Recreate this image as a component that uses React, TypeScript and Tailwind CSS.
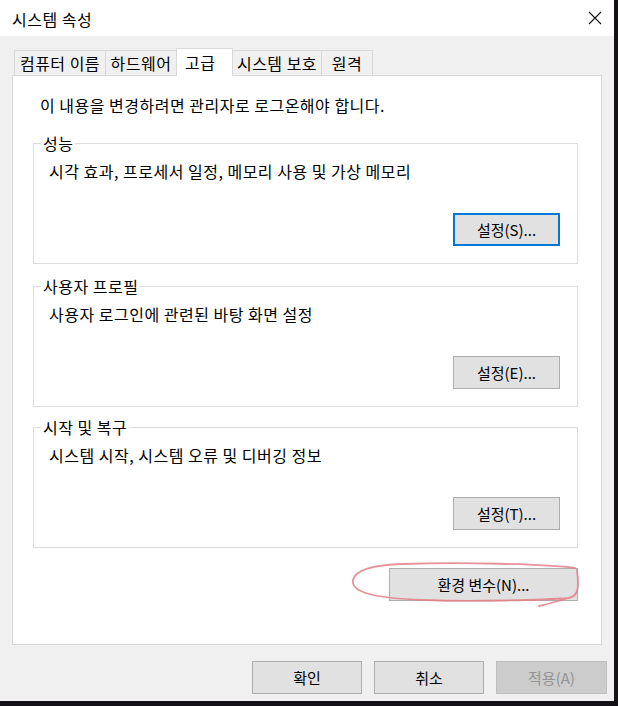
import React from "react";

const font = { fontFamily: '"Noto Sans CJK KR", "Noto Sans", sans-serif' };

function Btn({ label, focused = false, disabled = false, w = "w-[107px]" }: { label: string; focused?: boolean; disabled?: boolean; w?: string }) {
  const base = `${w} h-[33px] flex items-center justify-center text-[15px] leading-none`;
  if (disabled)
    return <div className={`${base} bg-[#cccccc] border border-[#bfbfbf] text-[#939393]`}>{label}</div>;
  if (focused)
    return <div className={`${base} bg-[#e1e1e1] border-2 border-[#0078d7] text-black`}>{label}</div>;
  return <div className={`${base} bg-[#e1e1e1] border border-[#adadad] text-black`}>{label}</div>;
}

function Group({ title, text, button, focused = false }: { title: string; text: string; button: string; focused?: boolean }) {
  return (
    <div className="relative w-[545px] h-[121px] border border-[#dcdcdc] flex flex-col">
      <span className="absolute -top-[11px] left-[7px] bg-white px-[2px] text-[16px] tracking-[0.5px] leading-[20px] text-black">{title}</span>
      <div className="pl-[15px] pt-[17px] text-[16px] tracking-[0.5px] leading-[20px] text-black">{text}</div>
      <div className="flex justify-end pr-[17px] mt-[32px]">
        <Btn label={button} focused={focused} />
      </div>
    </div>
  );
}

export default function App() {
  const tabs = [
    { l: "컴퓨터 이름", w: "w-[92px]" },
    { l: "하드웨어", w: "w-[72px]" },
    { l: "고급", w: "w-[57px]", sel: true },
    { l: "시스템 보호", w: "w-[90px]" },
    { l: "원격", w: "w-[52px]" },
  ];
  return (
    <div className="w-[618px] h-[706px] bg-[#141117] overflow-hidden" style={font}>
      <div className="relative w-[614px] h-[701px] bg-[#f0f0f0] flex flex-col">
        {/* title bar */}
        <div className="h-[36px] bg-white flex items-center justify-between pl-[12px] pr-[12px] shrink-0">
          <span className="text-[16px] tracking-[0.5px] leading-[20px] text-black mt-[1px]">시스템 속성</span>
          <svg width="14" height="14" viewBox="0 0 14 14">
            <path d="M1 1 L13 13 M13 1 L1 13" stroke="#111" strokeWidth="1.1" fill="none" />
          </svg>
        </div>
        {/* tabs */}
        <div className="flex items-end pl-[14px] pt-[12px] h-[39px] shrink-0">
          {tabs.map((t) =>
            t.sel ? (
              <div
                key={t.l}
                className={`${t.w} h-[28px] bg-white border border-b-0 border-[#d9d9d9] relative z-10 -mb-px -ml-px flex items-start pl-[8px] pt-[3px] text-[16px] tracking-[0.5px] leading-[20px] text-black`}
              >
                {t.l}
              </div>
            ) : (
              <div
                key={t.l}
                className={`${t.w} h-[25px] bg-[#f0f0f0] border border-b-0 border-[#d9d9d9] -ml-px first:ml-0 flex items-center justify-center text-[16px] tracking-[0.5px] leading-[20px] text-black`}
              >
                {t.l}
              </div>
            )
          )}
        </div>
        {/* panel */}
        <div className="mx-[12px] w-[590px] h-[570px] bg-white border border-[#d9d9d9] flex flex-col pl-[20px] shrink-0 relative">
          <div className="pl-[7px] pt-[19px] text-[16px] tracking-[0.5px] leading-[20px] text-black">이 내용을 변경하려면 관리자로 로그온해야 합니다.</div>
          <div className="mt-[28px]">
            <Group title="성능" text="시각 효과, 프로세서 일정, 메모리 사용 및 가상 메모리" button="설정(S)..." focused />
          </div>
          <div className="mt-[22px]">
            <Group title="사용자 프로필" text="사용자 로그인에 관련된 바탕 화면 설정" button="설정(E)..." />
          </div>
          <div className="mt-[20px]">
            <Group title="시작 및 복구" text="시스템 시작, 시스템 오류 및 디버깅 정보" button="설정(T)..." />
          </div>
          <div className="w-[545px] flex justify-end mt-[20px]">
            <Btn label="환경 변수(N)..." w="w-[189px]" />
          </div>
          {/* red hand-drawn annotation */}
          <svg className="absolute left-[330px] top-[480px] pointer-events-none" width="240" height="70" viewBox="0 0 240 70">
            <path
              d="M232 12 C 200 8, 120 6, 60 8 C 30 9, 12 14, 10 24 C 8 36, 30 42, 80 44 C 130 46, 200 44, 226 42 C 236 40, 236 30, 234 14 M 226 42 C 215 45, 205 48, 196 50"
              stroke="#e27f86"
              strokeOpacity="0.85"
              strokeWidth="1.8"
              fill="none"
              strokeLinecap="round"
            />
          </svg>
        </div>
        {/* bottom buttons */}
        <div className="flex justify-end gap-[12px] pr-[7px] mt-[16px]">
          <Btn label="확인" w="w-[110px]" />
          <Btn label="취소" w="w-[110px]" />
          <Btn label="적용(A)" w="w-[111px]" disabled />
        </div>
      </div>
    </div>
  );
}
